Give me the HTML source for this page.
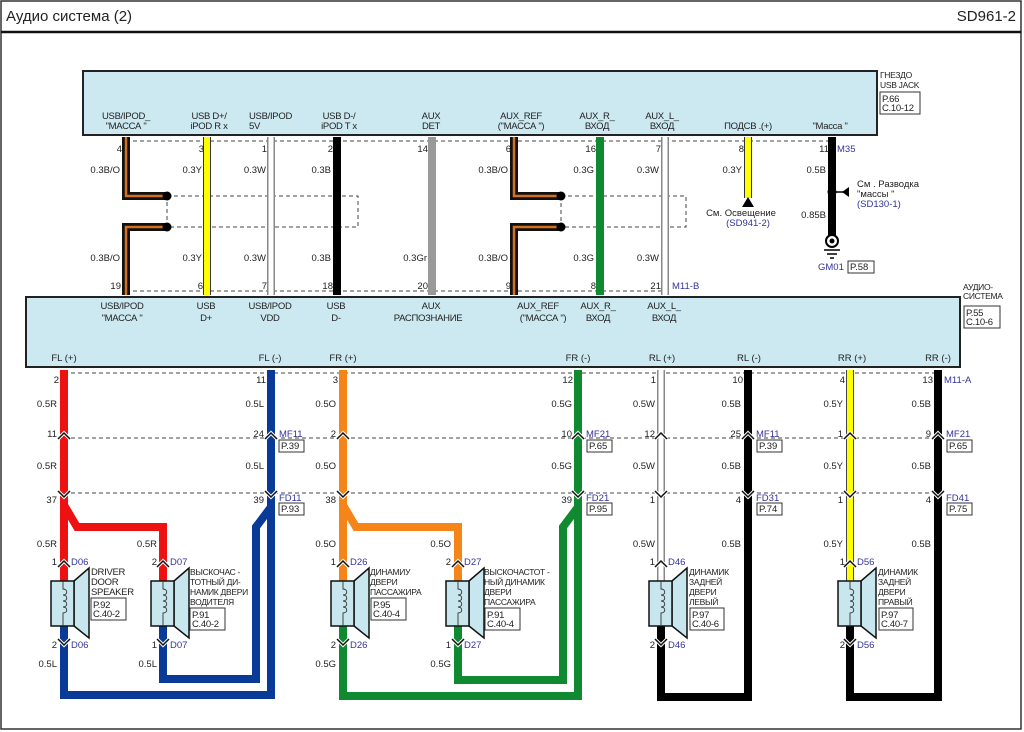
<!DOCTYPE html>
<html><head><meta charset="utf-8"><style>
html,body{margin:0;padding:0;background:#fff}
svg{display:block}
text{font-family:"Liberation Sans","DejaVu Sans",sans-serif;font-size:9.5px;fill:#222}
.b{fill:#33339a}
.m{text-anchor:middle}
.e{text-anchor:end}
.s{font-size:8.5px;letter-spacing:-0.3px}
.l{font-size:9.5px;letter-spacing:-0.3px}
</style></head><body>
<svg width="1024" height="732" viewBox="0 0 1024 732" xmlns="http://www.w3.org/2000/svg">
<defs>
<g id="spk">
<polygon points="11,0 26,-13 26,57 11,45" fill="#c8e6ee" stroke="#111" stroke-width="1.5"/>
<rect x="-12" y="0" width="23" height="45" fill="#c8e6ee" stroke="#111" stroke-width="1.5"/>
<path d="M0,0 v8 c5,0 5,6 0,6 c5,0 5,6 0,6 c5,0 5,6 0,6 c5,0 5,6 0,6 v13" fill="none" stroke="#333" stroke-width="0.9"/>
</g>
<path id="up" d="M-6,4 L0,-2 L6,4" fill="none" stroke="#fff" stroke-width="3.5"/>
<path id="upk" d="M-6,4 L0,-2 L6,4" fill="none" stroke="#111" stroke-width="1.5"/>
</defs>
<rect x="1" y="1" width="1020" height="728" fill="none" stroke="#333" stroke-width="1.5"/>
<line x1="1" y1="32" x2="1021" y2="32" stroke="#111" stroke-width="2.5"/>
<text x="6" y="21" style="font-size:15px">Аудио система  (2)</text>
<text x="1016" y="21" class="e" style="font-size:15px">SD961-2</text>

<rect x="83" y="71" width="794" height="64" fill="#cce9f1" stroke="#222" stroke-width="2"/>
<text x="880" y="78" class="s">ГНЕЗДО</text><text x="880" y="88" class="s">USB JACK</text>
<rect x="880" y="92" width="40" height="22" fill="#fff" stroke="#333"/>
<text x="882" y="102" class="l">P.66</text><text x="882" y="111" class="l">C.10-12</text>

<rect x="26" y="297" width="934" height="70" fill="#cce9f1" stroke="#222" stroke-width="2"/>
<text x="963" y="290" class="s">АУДИО-</text><text x="963" y="299" class="s">СИСТЕМА</text>
<rect x="964" y="306" width="36" height="22" fill="#fff" stroke="#333"/>
<text x="966" y="316" class="l">P.55</text><text x="966" y="325" class="l">C.10-6</text>

<g stroke="#444" stroke-width="1" stroke-dasharray="4,3" fill="none">
<line x1="126" y1="141" x2="832" y2="141"/>
<line x1="126" y1="291" x2="665" y2="291"/>
<rect x="167" y="196" width="191" height="31"/>
<rect x="561" y="196" width="125" height="31"/>
<line x1="64" y1="373" x2="938" y2="373"/>
<line x1="64" y1="438" x2="938" y2="438"/>
<line x1="64" y1="493" x2="938" y2="493"/>
</g>

<g fill="none" stroke-linejoin="miter">
<path d="M126,137 V196 H167 M126,295 V227 H167" stroke="#111" stroke-width="8"/>
<path d="M126,137 V196 H167 M126,295 V227 H167" stroke="#d07020" stroke-width="2.5"/>
<path d="M514,137 V196 H561 M514,295 V227 H561" stroke="#111" stroke-width="8"/>
<path d="M514,137 V196 H561 M514,295 V227 H561" stroke="#d07020" stroke-width="2.5"/>
<path d="M207,137 V295" stroke="#333" stroke-width="8"/><path d="M207,137 V295" stroke="#ffff00" stroke-width="6"/>
<path d="M271,137 V295" stroke="#888" stroke-width="8"/><path d="M271,137 V295" stroke="#fff" stroke-width="5"/>
<path d="M337,137 V295" stroke="#000" stroke-width="8"/>
<path d="M432,137 V295" stroke="#999" stroke-width="8"/>
<path d="M600,137 V295" stroke="#108a30" stroke-width="8"/>
<path d="M665,137 V295" stroke="#888" stroke-width="8"/><path d="M665,137 V295" stroke="#fff" stroke-width="5"/>
<path d="M748,137 V198" stroke="#333" stroke-width="8"/><path d="M748,137 V198" stroke="#ffff00" stroke-width="6"/>
<path d="M832,137 V236" stroke="#000" stroke-width="8"/>
</g>
<circle cx="167" cy="196" r="4.5" fill="#000"/><circle cx="167" cy="227" r="4.5" fill="#000"/>
<circle cx="561" cy="196" r="4.5" fill="#000"/><circle cx="561" cy="227" r="4.5" fill="#000"/>
<polygon points="742,207 748,197 754,207" fill="#000"/>
<circle cx="832" cy="192" r="4.5" fill="#000"/>
<line x1="832" y1="192" x2="848" y2="192" stroke="#000" stroke-width="1.5"/>
<polygon points="849,187 849,197 842,192" fill="#000"/>
<circle cx="832" cy="241" r="6" fill="#fff" stroke="#000" stroke-width="2"/><circle cx="832" cy="241" r="2.5" fill="#000"/>
<line x1="824" y1="250" x2="840" y2="250" stroke="#000" stroke-width="1.5"/>
<line x1="827" y1="254" x2="837" y2="254" stroke="#000" stroke-width="1.5"/>
<line x1="830" y1="258" x2="834" y2="258" stroke="#000" stroke-width="1.5"/>
<text x="741" y="216" class="m">См. Освещение</text>
<text x="748" y="226" class="m b">(SD941-2)</text>
<text x="857" y="187">См . Разводка</text>
<text x="857" y="197">"массы "</text>
<text x="857" y="207" class="b">(SD130-1)</text>
<text x="826" y="218" class="e">0.85B</text>
<text x="818" y="270" class="b">GM01</text>
<rect x="848" y="261" width="26" height="12" fill="#fff" stroke="#333"/><text x="850" y="270">P.58</text>

<g>
<text x="126" y="119" class="m l">USB/IPOD_</text><text x="126" y="129" class="m l">"МАССА "</text>
<text x="209" y="119" class="m l">USB D+/</text><text x="209" y="129" class="m l">iPOD R x</text>
<text x="249" y="119" class="l">USB/IPOD</text><text x="249" y="129" class="l">5V</text>
<text x="339" y="119" class="m l">USB D-/</text><text x="339" y="129" class="m l">iPOD T x</text>
<text x="431" y="119" class="m l">AUX</text><text x="431" y="129" class="m l">DET</text>
<text x="521" y="119" class="m l">AUX_REF</text><text x="521" y="129" class="m l">("МАССА ")</text>
<text x="597" y="119" class="m l">AUX_R_</text><text x="597" y="129" class="m l">ВХОД</text>
<text x="662" y="119" class="m l">AUX_L_</text><text x="662" y="129" class="m l">ВХОД</text>
<text x="748" y="129" class="m l">ПОДСВ .(+)</text>
<text x="830" y="129" class="m l">"Масса "</text>
<text x="122" y="309" class="m l">USB/IPOD</text><text x="122" y="321" class="m l">"МАССА "</text>
<text x="206" y="309" class="m l">USB</text><text x="206" y="321" class="m l">D+</text>
<text x="270" y="309" class="m l">USB/IPOD</text><text x="270" y="321" class="m l">VDD</text>
<text x="336" y="309" class="m l">USB</text><text x="336" y="321" class="m l">D-</text>
<text x="431" y="309" class="m l">AUX</text><text x="428" y="321" class="m l">РАСПОЗНАНИЕ</text>
<text x="538" y="309" class="m l">AUX_REF</text><text x="543" y="321" class="m l">("МАССА ")</text>
<text x="598" y="309" class="m l">AUX_R_</text><text x="598" y="321" class="m l">ВХОД</text>
<text x="664" y="309" class="m l">AUX_L_</text><text x="664" y="321" class="m l">ВХОД</text>
</g>
<g>
<text x="64" y="361" class="m">FL (+)</text><text x="270" y="361" class="m">FL (-)</text>
<text x="343" y="361" class="m">FR (+)</text><text x="578" y="361" class="m">FR (-)</text>
<text x="662" y="361" class="m">RL (+)</text><text x="749" y="361" class="m">RL (-)</text>
<text x="852" y="361" class="m">RR (+)</text><text x="938" y="361" class="m">RR (-)</text>
</g>
<g>
<text x="122" y="152" class="e">4</text><text x="204" y="152" class="e">3</text><text x="267" y="152" class="e">1</text><text x="333" y="152" class="e">2</text><text x="428" y="152" class="e">14</text><text x="511" y="152" class="e">6</text><text x="596" y="152" class="e">16</text><text x="661" y="152" class="e">7</text><text x="744" y="152" class="e">8</text><text x="829" y="152" class="e">11</text>
<text x="837" y="152" class="b">M35</text>
<text x="120" y="173" class="e">0.3B/O</text><text x="202" y="173" class="e">0.3Y</text><text x="266" y="173" class="e">0.3W</text><text x="331" y="173" class="e">0.3B</text><text x="508" y="173" class="e">0.3B/O</text><text x="594" y="173" class="e">0.3G</text><text x="659" y="173" class="e">0.3W</text><text x="742" y="173" class="e">0.3Y</text><text x="826" y="173" class="e">0.5B</text>
<text x="120" y="261" class="e">0.3B/O</text><text x="202" y="261" class="e">0.3Y</text><text x="266" y="261" class="e">0.3W</text><text x="331" y="261" class="e">0.3B</text><text x="427" y="261" class="e">0.3Gr</text><text x="508" y="261" class="e">0.3B/O</text><text x="594" y="261" class="e">0.3G</text><text x="659" y="261" class="e">0.3W</text>
<text x="121" y="289" class="e">19</text><text x="203" y="289" class="e">6</text><text x="267" y="289" class="e">7</text><text x="333" y="289" class="e">18</text><text x="428" y="289" class="e">20</text><text x="511" y="289" class="e">9</text><text x="596" y="289" class="e">8</text><text x="661" y="289" class="e">21</text>
<text x="672" y="289" class="b">M11-B</text>
</g>

<g fill="none" stroke-linejoin="miter">
<path d="M64,370 V505 L77,527 H163 V582" stroke="#ee1111" stroke-width="8"/>
<path d="M64,370 V582" stroke="#ee1111" stroke-width="8"/>
<path d="M64,626 V695 H271 V370 M163,626 V679 H256 V527 L271,507" stroke="#0a3a98" stroke-width="8"/>
<path d="M343,370 V505 L356,527 H458 V582" stroke="#f58518" stroke-width="8"/>
<path d="M343,370 V582" stroke="#f58518" stroke-width="8"/>
<path d="M343,626 V696 H578 V370 M458,626 V680 H563 V527 L578,507" stroke="#108a30" stroke-width="8"/>
<path d="M661,370 V582" stroke="#888" stroke-width="8"/><path d="M661,370 V582" stroke="#fff" stroke-width="5"/>
<path d="M661,626 V697 H748 V370" stroke="#000" stroke-width="8"/>
<path d="M850,370 V582" stroke="#444" stroke-width="8"/><path d="M850,370 V582" stroke="#ffff00" stroke-width="6"/>
<path d="M850,626 V697 H938 V370" stroke="#000" stroke-width="8"/>
</g>
<use href="#spk" x="63" y="581"/><use href="#spk" x="163" y="581"/>
<use href="#spk" x="343" y="581"/><use href="#spk" x="458" y="581"/>
<use href="#spk" x="661" y="581"/><use href="#spk" x="850" y="581"/>

<g>
<use href="#up" x="64" y="435"/><use href="#upk" x="64" y="435"/>
<use href="#up" x="271" y="435"/><use href="#upk" x="271" y="435"/>
<use href="#up" x="343" y="435"/><use href="#upk" x="343" y="435"/>
<use href="#up" x="578" y="435"/><use href="#upk" x="578" y="435"/>
<use href="#up" x="661" y="435"/><use href="#upk" x="661" y="435"/>
<use href="#up" x="748" y="435"/><use href="#upk" x="748" y="435"/>
<use href="#up" x="850" y="435"/><use href="#upk" x="850" y="435"/>
<use href="#up" x="938" y="435"/><use href="#upk" x="938" y="435"/>
<use href="#up" x="64" y="563"/><use href="#upk" x="64" y="563"/>
<use href="#up" x="163" y="563"/><use href="#upk" x="163" y="563"/>
<use href="#up" x="343" y="563"/><use href="#upk" x="343" y="563"/>
<use href="#up" x="458" y="563"/><use href="#upk" x="458" y="563"/>
<use href="#up" x="661" y="563"/><use href="#upk" x="661" y="563"/>
<use href="#up" x="850" y="563"/><use href="#upk" x="850" y="563"/>
</g>
<g transform="scale(1,-1)">
<use href="#up" x="64" y="-495"/><use href="#upk" x="64" y="-495"/>
<use href="#up" x="271" y="-495"/><use href="#upk" x="271" y="-495"/>
<use href="#up" x="343" y="-495"/><use href="#upk" x="343" y="-495"/>
<use href="#up" x="578" y="-495"/><use href="#upk" x="578" y="-495"/>
<use href="#up" x="661" y="-495"/><use href="#upk" x="661" y="-495"/>
<use href="#up" x="748" y="-495"/><use href="#upk" x="748" y="-495"/>
<use href="#up" x="850" y="-495"/><use href="#upk" x="850" y="-495"/>
<use href="#up" x="938" y="-495"/><use href="#upk" x="938" y="-495"/>
<use href="#up" x="64" y="-643"/><use href="#upk" x="64" y="-643"/>
<use href="#up" x="163" y="-643"/><use href="#upk" x="163" y="-643"/>
<use href="#up" x="343" y="-643"/><use href="#upk" x="343" y="-643"/>
<use href="#up" x="458" y="-643"/><use href="#upk" x="458" y="-643"/>
<use href="#up" x="661" y="-643"/><use href="#upk" x="661" y="-643"/>
<use href="#up" x="850" y="-643"/><use href="#upk" x="850" y="-643"/>
</g>

<g>
<text x="59" y="383" class="e">2</text><text x="266" y="383" class="e">11</text><text x="338" y="383" class="e">3</text><text x="573" y="383" class="e">12</text><text x="656" y="383" class="e">1</text><text x="743" y="383" class="e">10</text><text x="845" y="383" class="e">4</text><text x="933" y="383" class="e">13</text>
<text x="944" y="383" class="b">M11-A</text>
<text x="57" y="407" class="e">0.5R</text><text x="264" y="407" class="e">0.5L</text><text x="336" y="407" class="e">0.5O</text><text x="572" y="407" class="e">0.5G</text><text x="655" y="407" class="e">0.5W</text><text x="741" y="407" class="e">0.5B</text><text x="843" y="407" class="e">0.5Y</text><text x="931" y="407" class="e">0.5B</text>
<text x="57" y="437" class="e">11</text><text x="264" y="437" class="e">24</text><text x="336" y="437" class="e">2</text><text x="572" y="437" class="e">10</text><text x="655" y="437" class="e">12</text><text x="741" y="437" class="e">25</text><text x="843" y="437" class="e">1</text><text x="931" y="437" class="e">9</text>
<text x="279" y="437" class="b">MF11</text><text x="586" y="437" class="b">MF21</text><text x="756" y="437" class="b">MF11</text><text x="946" y="437" class="b">MF21</text>
<rect x="279" y="440" width="25" height="12" fill="#fff" stroke="#333"/><text x="281" y="449">P.39</text>
<rect x="587" y="440" width="25" height="12" fill="#fff" stroke="#333"/><text x="589" y="449">P.65</text>
<rect x="757" y="440" width="25" height="12" fill="#fff" stroke="#333"/><text x="759" y="449">P.39</text>
<rect x="947" y="440" width="25" height="12" fill="#fff" stroke="#333"/><text x="949" y="449">P.65</text>
<text x="57" y="469" class="e">0.5R</text><text x="264" y="469" class="e">0.5L</text><text x="336" y="469" class="e">0.5O</text><text x="572" y="469" class="e">0.5G</text><text x="655" y="469" class="e">0.5W</text><text x="741" y="469" class="e">0.5B</text><text x="843" y="469" class="e">0.5Y</text><text x="931" y="469" class="e">0.5B</text>
<text x="57" y="503" class="e">37</text><text x="264" y="503" class="e">39</text><text x="336" y="503" class="e">38</text><text x="572" y="503" class="e">39</text><text x="655" y="503" class="e">1</text><text x="741" y="503" class="e">4</text><text x="843" y="503" class="e">1</text><text x="931" y="503" class="e">4</text>
<text x="279" y="501" class="b">FD11</text><text x="586" y="501" class="b">FD21</text><text x="756" y="501" class="b">FD31</text><text x="946" y="501" class="b">FD41</text>
<rect x="279" y="503" width="25" height="12" fill="#fff" stroke="#333"/><text x="281" y="512">P.93</text>
<rect x="587" y="503" width="25" height="12" fill="#fff" stroke="#333"/><text x="589" y="512">P.95</text>
<rect x="757" y="503" width="25" height="12" fill="#fff" stroke="#333"/><text x="759" y="512">P.74</text>
<rect x="947" y="503" width="25" height="12" fill="#fff" stroke="#333"/><text x="949" y="512">P.75</text>
<text x="57" y="547" class="e">0.5R</text><text x="157" y="547" class="e">0.5R</text><text x="336" y="547" class="e">0.5O</text><text x="451" y="547" class="e">0.5O</text><text x="655" y="547" class="e">0.5W</text><text x="741" y="547" class="e">0.5B</text><text x="843" y="547" class="e">0.5Y</text><text x="931" y="547" class="e">0.5B</text>
<text x="57" y="565" class="e">1</text><text x="157" y="565" class="e">2</text><text x="336" y="565" class="e">1</text><text x="451" y="565" class="e">2</text><text x="655" y="565" class="e">1</text><text x="845" y="565" class="e">1</text>
<text x="71" y="565" class="b">D06</text><text x="170" y="565" class="b">D07</text><text x="350" y="565" class="b">D26</text><text x="464" y="565" class="b">D27</text><text x="668" y="565" class="b">D46</text><text x="857" y="565" class="b">D56</text>
<text x="57" y="648" class="e">2</text><text x="157" y="648" class="e">1</text><text x="336" y="648" class="e">2</text><text x="451" y="648" class="e">1</text><text x="655" y="648" class="e">2</text><text x="845" y="648" class="e">2</text>
<text x="71" y="648" class="b">D06</text><text x="170" y="648" class="b">D07</text><text x="350" y="648" class="b">D26</text><text x="464" y="648" class="b">D27</text><text x="668" y="648" class="b">D46</text><text x="857" y="648" class="b">D56</text>
<text x="57" y="667" class="e">0.5L</text><text x="157" y="667" class="e">0.5L</text><text x="336" y="667" class="e">0.5G</text><text x="451" y="667" class="e">0.5G</text>
</g>
<g>
<text x="91" y="575" class="l">DRIVER</text><text x="91" y="585" class="l">DOOR</text><text x="91" y="595" class="l">SPEAKER</text>
<rect x="91" y="598" width="35" height="22" fill="#fff" stroke="#333"/><text x="93" y="608" class="l">P.92</text><text x="93" y="617" class="l">C.40-2</text>
<text x="190" y="575" class="s">ВЫСКОЧАС  -</text><text x="190" y="585" class="s">ТОТНЫЙ ДИ-</text><text x="190" y="595" class="s">НАМИК ДВЕРИ</text><text x="190" y="605" class="s">ВОДИТЕЛЯ</text>
<rect x="190" y="608" width="35" height="22" fill="#fff" stroke="#333"/><text x="192" y="618" class="l">P.91</text><text x="192" y="627" class="l">C.40-2</text>
<text x="370" y="575" class="s">ДИНАМИУ</text><text x="370" y="585" class="s">ДВЕРИ</text><text x="370" y="595" class="s">ПАССАЖИРА</text>
<rect x="371" y="598" width="35" height="22" fill="#fff" stroke="#333"/><text x="373" y="608" class="l">P.95</text><text x="373" y="617" class="l">C.40-4</text>
<text x="484" y="575" class="s">ВЫСКОЧАСТОТ  -</text><text x="484" y="585" class="s">НЫЙ ДИНАМИК</text><text x="484" y="595" class="s">ДВЕРИ</text><text x="484" y="605" class="s">ПАССАЖИРА</text>
<rect x="485" y="608" width="35" height="22" fill="#fff" stroke="#333"/><text x="487" y="618" class="l">P.91</text><text x="487" y="627" class="l">C.40-4</text>
<text x="689" y="575" class="s">ДИНАМИК</text><text x="689" y="585" class="s">ЗАДНЕЙ</text><text x="689" y="595" class="s">ДВЕРИ</text><text x="689" y="605" class="s">ЛЕВЫЙ</text>
<rect x="690" y="608" width="34" height="22" fill="#fff" stroke="#333"/><text x="692" y="618" class="l">P.97</text><text x="692" y="627" class="l">C.40-6</text>
<text x="878" y="575" class="s">ДИНАМИК</text><text x="878" y="585" class="s">ЗАДНЕЙ</text><text x="878" y="595" class="s">ДВЕРИ</text><text x="878" y="605" class="s">ПРАВЫЙ</text>
<rect x="879" y="608" width="34" height="22" fill="#fff" stroke="#333"/><text x="881" y="618" class="l">P.97</text><text x="881" y="627" class="l">C.40-7</text>
</g>
</svg>
</body></html>
